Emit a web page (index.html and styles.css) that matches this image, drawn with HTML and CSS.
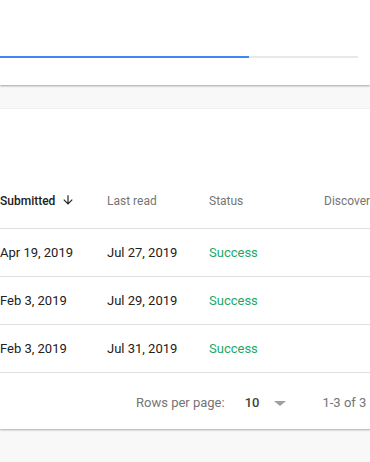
FILE: index.html
```html
<!DOCTYPE html>
<html>
<head>
<meta charset="utf-8">
<link rel="stylesheet" href="styles.css">
</head>
<body>
<div class="top-card">
  <div class="progress"><div class="progress-fill"></div></div>
</div>
<div class="card">
  <div class="card-title"></div>
  <table class="table">
    <thead>
      <tr>
        <th class="c1 sorted">Submitted <svg class="arrow" width="14" height="14" viewBox="0 0 24 24"><path d="M20 12l-1.41-1.41L13 16.17V4h-2v12.17l-5.58-5.59L4 12l8 8 8-8z" fill="#212121"/></svg></th>
        <th class="c2">Last read</th>
        <th class="c3">Status</th>
        <th class="c4">Discovered</th>
      </tr>
    </thead>
    <tbody>
      <tr><td class="c1">Apr 19, 2019</td><td class="c2">Jul 27, 2019</td><td class="c3 ok">Success</td><td class="c4"></td></tr>
      <tr><td class="c1">Feb 3, 2019</td><td class="c2">Jul 29, 2019</td><td class="c3 ok">Success</td><td class="c4"></td></tr>
      <tr><td class="c1">Feb 3, 2019</td><td class="c2">Jul 31, 2019</td><td class="c3 ok">Success</td><td class="c4"></td></tr>
    </tbody>
  </table>
  <div class="footer">
    <span class="rpp">Rows per page:</span>
    <span class="rpp-val">10</span>
    <span class="caret"></span>
    <span class="range">1-3 of 3</span>
  </div>
</div>
</body>
</html>
```

FILE: styles.css
```css
html, body {
  margin: 0;
  padding: 0;
  background: #f8f8f8;
  font-family: Roboto, "Liberation Sans", Arial, sans-serif;
  overflow: hidden;
  width: 370px;
  height: 462px;
}
.top-card {
  background: #fff;
  height: 85px;
  box-shadow: 0 1px 2px rgba(0,0,0,0.35);
  position: relative;
  z-index: 1;
  padding-top: 56px;
  box-sizing: border-box;
}
.progress {
  width: 358px;
  height: 2px;
  background: #e8e8e8;
  display: flex;
}
.progress-fill {
  width: 249px;
  height: 2px;
  background: #4285f4;
}
.card {
  margin-top: 24px;
  background: #fff;
  box-shadow: 0 1px 2px rgba(0,0,0,0.3), 0 0 1px rgba(0,0,0,0.08);
  overflow: hidden;
  width: 420px;
}
.card-title {
  height: 64px;
}
.table {
  border-collapse: collapse;
  table-layout: fixed;
  width: 420px;
}
.table th, .table td {
  padding: 0;
  text-align: left;
  white-space: nowrap;
  border-bottom: 1px solid #e0e0e0;
}
.table th {
  height: 55px;
  font-size: 12px;
  font-weight: 400;
  color: #757575;
  vertical-align: middle;
  padding-top: 1px;
  box-sizing: border-box;
}
.table th.sorted {
  color: #212121;
  font-weight: 500;
}
.arrow {
  vertical-align: -2px;
  margin-left: 3px;
}
.table td {
  height: 47px;
  font-size: 13px;
  color: #212121;
}
.c1 { width: 107px; }
.c2 { width: 102px; }
.c3 { width: 115px; }
.c4 { width: 96px; }
.table td.ok { color: #22a866; }
.footer {
  height: 56px;
  padding-top: 3px;
  box-sizing: border-box;
  display: flex;
  align-items: center;
  font-size: 13px;
  color: #757575;
}
.rpp { margin-left: 136px; }
.rpp-val {
  margin-left: 20px;
  color: #424242;
  font-weight: 500;
  font-size: 13px;
}
.caret {
  margin-left: 15px;
  width: 0;
  height: 0;
  border-left: 6px solid transparent;
  border-right: 6px solid transparent;
  border-top: 5px solid #9e9e9e;
  margin-top: 3px;
}
.range { margin-left: 36px; }
```
